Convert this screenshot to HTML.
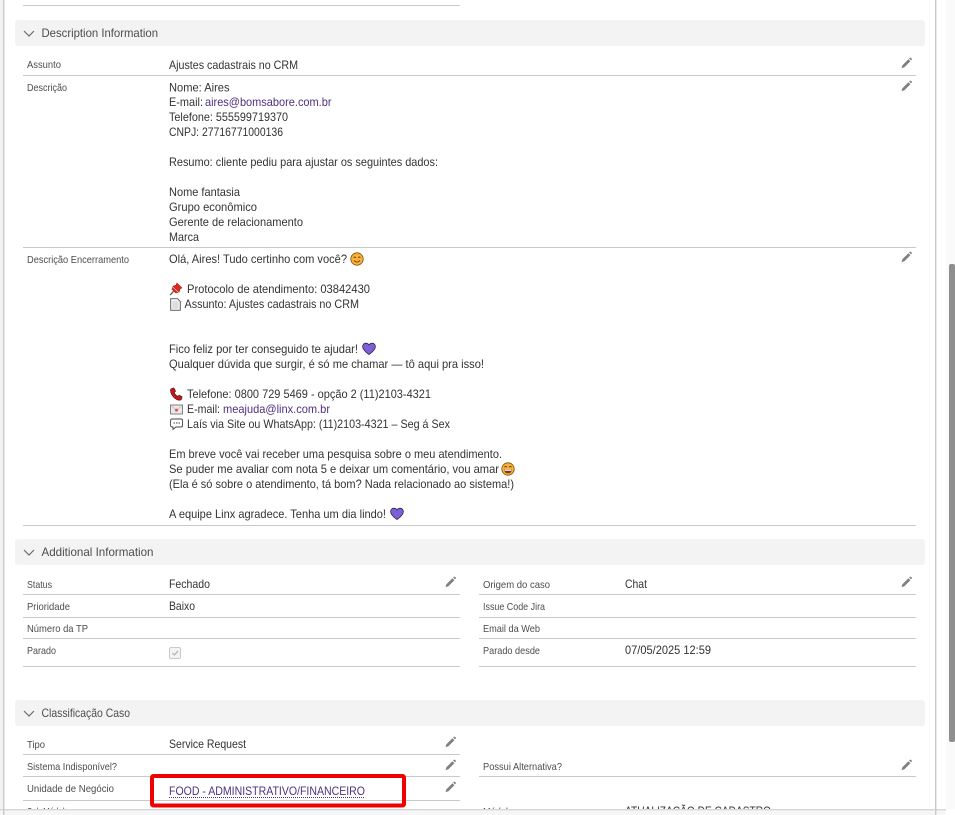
<!DOCTYPE html>
<html lang="pt-BR">
<head>
<meta charset="utf-8">
<title>Caso</title>
<style>
html,body{margin:0;padding:0;width:955px;height:815px;overflow:hidden;background:#fff}
svg{display:block;position:absolute;left:0;top:0}
text{font-family:"Liberation Sans",sans-serif;font-size:12px;fill:#333}
.l{font-size:10.5px;fill:#4d4d4d}
.h{font-size:12px;fill:#4d4d4d}
.a{fill:#4f3080}
.ln{fill:#c9c9c9}
.hd{fill:#f3f3f3}
</style>
</head>
<body>
<svg width="955" height="815" viewBox="0 0 955 815" xmlns="http://www.w3.org/2000/svg">
<defs>
<g id="pen"><path d="M-5 5.2 -4.1 2.2 1.9 -3.8 3.9 -1.8 -2.1 4.2Z" fill="#808080"/><path d="M2.6 -4.5 3.4 -5.2Q3.9 -5.6 4.4 -5.2L5.2 -4.4Q5.6 -3.9 5.2 -3.4L4.5 -2.6Z" fill="#808080"/></g>
<path id="chev" d="M24 31 29 36 34 31" fill="none" stroke="#6b6b6b" stroke-width="1.2"/>
<g id="heart"><path d="M7 12.6C3 9.6 .6 7.3 .6 4.6 .6 2.6 2.1 1.2 3.9 1.2 5.2 1.2 6.3 1.9 7 3 7.7 1.9 8.8 1.2 10.1 1.2 11.9 1.2 13.4 2.6 13.4 4.6 13.4 7.3 11 9.6 7 12.6Z" fill="#7d5fd6" stroke="#2c2350" stroke-width=".8"/></g>
</defs>

<rect x="0" y="0" width="3" height="815" fill="#f3f3f3"/>
<rect x="3" y="0" width="1.4" height="815" class="ln"/>
<rect x="935" y="0" width="1.4" height="815" class="ln"/>
<rect x="946" y="0" width="9" height="815" fill="#fafafa"/>
<rect x="949" y="264" width="6" height="478" rx="2" fill="#8e8e8e"/>

<rect x="23" y="5" width="437" height="1" class="ln"/>

<rect x="15" y="20" width="910" height="26" rx="3" class="hd"/>
<use href="#chev"/>
<text class="h" x="41.5" y="37" textLength="116.5" lengthAdjust="spacingAndGlyphs">Description Information</text>

<text class="l" x="27" y="68" textLength="34" lengthAdjust="spacingAndGlyphs">Assunto</text>
<text x="169" y="69" textLength="129" lengthAdjust="spacingAndGlyphs">Ajustes cadastrais no CRM</text>
<use href="#pen" x="906.5" y="63"/>
<rect x="23" y="75" width="893" height="1" class="ln"/>

<text class="l" x="27" y="91" textLength="40" lengthAdjust="spacingAndGlyphs">Descrição</text>
<use href="#pen" x="906.5" y="86"/>
<text x="169" y="91.5" textLength="60.5" lengthAdjust="spacingAndGlyphs">Nome: Aires</text>
<text x="169" y="106" textLength="34" lengthAdjust="spacingAndGlyphs">E-mail:</text>
<text class="a" x="205" y="106" textLength="126.5" lengthAdjust="spacingAndGlyphs">aires@bomsabore.com.br</text>
<text x="169" y="121" textLength="119" lengthAdjust="spacingAndGlyphs">Telefone: 555599719370</text>
<text x="169" y="136" textLength="114" lengthAdjust="spacingAndGlyphs">CNPJ: 27716771000136</text>
<text x="169" y="166" textLength="269" lengthAdjust="spacingAndGlyphs">Resumo: cliente pediu para ajustar os seguintes dados:</text>
<text x="169" y="196" textLength="71" lengthAdjust="spacingAndGlyphs">Nome fantasia</text>
<text x="169" y="211" textLength="88" lengthAdjust="spacingAndGlyphs">Grupo econômico</text>
<text x="169" y="226" textLength="134" lengthAdjust="spacingAndGlyphs">Gerente de relacionamento</text>
<text x="169" y="241" textLength="30" lengthAdjust="spacingAndGlyphs">Marca</text>
<rect x="23" y="247" width="893" height="1" class="ln"/>

<text class="l" x="27" y="263" textLength="102" lengthAdjust="spacingAndGlyphs">Descrição Encerramento</text>
<use href="#pen" x="906.5" y="257"/>
<text x="169" y="263" textLength="178" lengthAdjust="spacingAndGlyphs">Olá, Aires! Tudo certinho com você?</text>
<g transform="translate(350,252)"><circle cx="7" cy="7" r="6.2" fill="#f9b233" stroke="#7a4a10" stroke-width=".8"/><path d="M3.6 5.6Q4.8 4.4 6 5.6M8 5.6Q9.2 4.4 10.4 5.6M4 8.6Q7 11.6 10 8.6" fill="none" stroke="#5a3a10" stroke-width=".9"/></g>

<g transform="translate(169.5,282.5)"><path d="M7.4 .4 12.6 5.4 10.6 6.4 9.6 9.8 3.2 3.8 6.6 2.6Z" fill="#e0281c" stroke="#8a1410" stroke-width=".5"/><path d="M2.8 4.4 9 10.4 6 10.8 2.2 7Z" fill="#d8261c"/><path d="M4 8.8 .6 12.6" stroke="#555" stroke-width="1.2"/></g>
<text x="187" y="293" textLength="183" lengthAdjust="spacingAndGlyphs">Protocolo de atendimento: 03842430</text>
<g transform="translate(170,298)"><path d="M.7.7H7.6L10.3 3.4V12.3H.7Z" fill="#f4f4f4" stroke="#555" stroke-width=".9"/><path d="M2.5 4H8.5M2.5 6H8.5M2.5 8H8.5M2.5 10H8.5" stroke="#bbb" stroke-width=".8"/></g>
<text x="184.5" y="308" textLength="174.5" lengthAdjust="spacingAndGlyphs">Assunto: Ajustes cadastrais no CRM</text>

<text x="169" y="353" textLength="189" lengthAdjust="spacingAndGlyphs">Fico feliz por ter conseguido te ajudar!</text>
<use href="#heart" x="362" y="342"/>
<text x="169" y="368" textLength="315" lengthAdjust="spacingAndGlyphs">Qualquer dúvida que surgir, é só me chamar — tô aqui pra isso!</text>

<g transform="translate(170,387.5)"><path d="M.8 1.4 3.8.4 5.6 3.6 4.2 5Q5.2 7.6 7.8 8.8L9.2 7.6 12.2 9.4 11.2 12.2Q9.6 13.2 7 12.2 2.6 10 .8 5.2 .2 3 .8 1.4Z" fill="#c4161c" stroke="#4a0c0c" stroke-width=".6"/></g>
<text x="187" y="398" textLength="244" lengthAdjust="spacingAndGlyphs">Telefone: 0800 729 5469 - opção 2 (11)2103-4321</text>
<g transform="translate(170,403.5)"><rect x=".5" y="1.5" width="12" height="9" fill="#e9e9e9" stroke="#777" stroke-width=".9"/><path d="M1 2 6.5 7 12 2" fill="none" stroke="#bbb" stroke-width=".7"/><circle cx="6.5" cy="6.6" r="1.5" fill="#e0553f"/></g>
<text x="187" y="413" textLength="33" lengthAdjust="spacingAndGlyphs">E-mail:</text>
<text class="a" x="223" y="413" textLength="107" lengthAdjust="spacingAndGlyphs">meajuda@linx.com.br</text>
<g transform="translate(170,418)"><path d="M2 1H11Q12.5 1 12.5 2.5V7.5Q12.5 9 11 9H6L3 11.4V9H2Q.6 9 .6 7.5V2.5Q.6 1 2 1Z" fill="#fff" stroke="#444" stroke-width=".9"/><path d="M3.5 5H5M6 5H7.5M8.5 5H10" stroke="#444" stroke-width="1"/></g>
<text x="187" y="428" textLength="263" lengthAdjust="spacingAndGlyphs">Laís via Site ou WhatsApp: (11)2103-4321 – Seg á Sex</text>

<text x="169" y="458" textLength="333" lengthAdjust="spacingAndGlyphs">Em breve você vai receber uma pesquisa sobre o meu atendimento.</text>
<text x="169" y="473" textLength="330" lengthAdjust="spacingAndGlyphs">Se puder me avaliar com nota 5 e deixar um comentário, vou amar</text>
<g transform="translate(501,462)"><circle cx="7" cy="7" r="6.2" fill="#f9b233" stroke="#7a4a10" stroke-width=".8"/><path d="M3.4 5.2Q4.8 3.8 6 5.2M8 5.2Q9.2 3.8 10.6 5.2" fill="none" stroke="#5a3a10" stroke-width=".9"/><path d="M3 7.4H11Q10.6 11.4 7 11.4 3.4 11.4 3 7.4Z" fill="#7a3a20"/><path d="M3.6 7.6H10.4V8.8H3.6Z" fill="#fff"/></g>
<text x="169" y="488" textLength="345" lengthAdjust="spacingAndGlyphs">(Ela é só sobre o atendimento, tá bom? Nada relacionado ao sistema!)</text>
<text x="169" y="518" textLength="217" lengthAdjust="spacingAndGlyphs">A equipe Linx agradece. Tenha um dia lindo!</text>
<use href="#heart" x="390" y="507"/>
<rect x="23" y="525" width="893" height="1" class="ln"/>

<rect x="15" y="539" width="910" height="26" rx="3" class="hd"/>
<use href="#chev" y="519"/>
<text class="h" x="41.5" y="556" textLength="112" lengthAdjust="spacingAndGlyphs">Additional Information</text>

<text class="l" x="27" y="588" textLength="25" lengthAdjust="spacingAndGlyphs">Status</text>
<text x="169" y="588" textLength="41" lengthAdjust="spacingAndGlyphs">Fechado</text>
<use href="#pen" x="450.5" y="582"/>
<rect x="23" y="594" width="437" height="1" class="ln"/>
<text class="l" x="27" y="610" textLength="43" lengthAdjust="spacingAndGlyphs">Prioridade</text>
<text x="169" y="610" textLength="26" lengthAdjust="spacingAndGlyphs">Baixo</text>
<rect x="23" y="617" width="437" height="1" class="ln"/>
<text class="l" x="27" y="632" textLength="61" lengthAdjust="spacingAndGlyphs">Número da TP</text>
<rect x="23" y="638" width="437" height="1" class="ln"/>
<text class="l" x="27" y="654" textLength="29" lengthAdjust="spacingAndGlyphs">Parado</text>
<rect x="169.5" y="647.5" width="11" height="11" rx="1.5" fill="#f3f3f3" stroke="#c9c9c9"/>
<path d="M172.5 653 174.5 655 178 651" fill="none" stroke="#a8a8a8" stroke-width="1"/>
<rect x="23" y="666" width="437" height="1" class="ln"/>

<text class="l" x="483" y="588" textLength="67" lengthAdjust="spacingAndGlyphs">Origem do caso</text>
<text x="625" y="588" textLength="22" lengthAdjust="spacingAndGlyphs">Chat</text>
<use href="#pen" x="906.5" y="582"/>
<rect x="479" y="594" width="437" height="1" class="ln"/>
<text class="l" x="483" y="610" textLength="62" lengthAdjust="spacingAndGlyphs">Issue Code Jira</text>
<rect x="479" y="617" width="437" height="1" class="ln"/>
<text class="l" x="483" y="632" textLength="57" lengthAdjust="spacingAndGlyphs">Email da Web</text>
<rect x="479" y="638" width="437" height="1" class="ln"/>
<text class="l" x="483" y="654" textLength="57" lengthAdjust="spacingAndGlyphs">Parado desde</text>
<text x="625" y="654" textLength="86" lengthAdjust="spacingAndGlyphs">07/05/2025 12:59</text>
<rect x="479" y="666" width="437" height="1" class="ln"/>

<rect x="15" y="700" width="910" height="26" rx="3" class="hd"/>
<use href="#chev" y="680"/>
<text class="h" x="41.5" y="717" textLength="88.5" lengthAdjust="spacingAndGlyphs">Classificação Caso</text>

<text class="l" x="27" y="748" textLength="18" lengthAdjust="spacingAndGlyphs">Tipo</text>
<text x="169" y="748" textLength="77" lengthAdjust="spacingAndGlyphs">Service Request</text>
<use href="#pen" x="450.5" y="742"/>
<rect x="23" y="754" width="437" height="1" class="ln"/>
<text class="l" x="27" y="770" textLength="90" lengthAdjust="spacingAndGlyphs">Sistema Indisponível?</text>
<use href="#pen" x="450.5" y="765"/>
<rect x="23" y="776" width="437" height="1" class="ln"/>
<text class="l" x="483" y="770" textLength="79" lengthAdjust="spacingAndGlyphs">Possui Alternativa?</text>
<use href="#pen" x="906.5" y="765"/>
<rect x="479" y="776" width="437" height="1" class="ln"/>
<text class="l" x="27" y="792" textLength="87" lengthAdjust="spacingAndGlyphs">Unidade de Negócio</text>
<text class="a" x="169" y="795" textLength="196" lengthAdjust="spacingAndGlyphs">FOOD - ADMINISTRATIVO/FINANCEIRO</text>
<path d="M169 797.5H365" stroke="#4f3080" stroke-width="1" stroke-dasharray="1 1"/>
<use href="#pen" x="450.5" y="787"/>
<rect x="23" y="800" width="437" height="1" class="ln"/>
<text class="l" x="27" y="815" textLength="42" lengthAdjust="spacingAndGlyphs">Sub Módulo</text>
<text class="l" x="483" y="815" textLength="30" lengthAdjust="spacingAndGlyphs">Módulo</text>
<text x="625" y="815" textLength="146" lengthAdjust="spacingAndGlyphs">ATUALIZAÇÃO DE CADASTRO</text>

<rect x="0" y="809" width="955" height="6" fill="#fff"/>
<rect x="0" y="809" width="946" height="1" fill="#d6d6d6"/>
<rect x="0" y="810" width="946" height="1" fill="#ebebeb"/>
<rect x="0" y="811" width="946" height="4" fill="#f6f6f6"/>
<rect x="3" y="809" width="1.4" height="6" class="ln"/>
<rect x="935" y="809" width="1.4" height="6" class="ln"/>

<rect x="152" y="776" width="252" height="29.5" rx="1.5" fill="none" stroke="#f00000" stroke-width="4"/>
</svg>
</body>
</html>
